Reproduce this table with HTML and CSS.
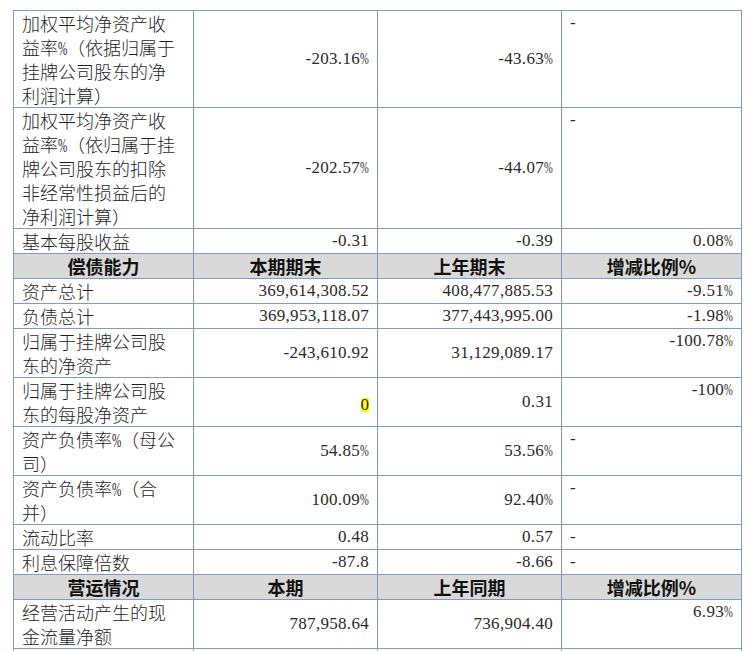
FILE: index.html
```html
<!DOCTYPE html>
<html lang="zh-CN">
<head>
<meta charset="utf-8">
<link rel="stylesheet" href="styles.css">
</head>
<body>
<table class="fin">
  <colgroup>
    <col class="c1"><col class="c2"><col class="c3"><col class="c4">
  </colgroup>
  <tbody>
    <tr>
      <td class="lbl">加权平均净资产收<br>益率<span class="pc">%</span>（依据归属于<br>挂牌公司股东的净<br>利润计算）</td>
      <td class="num">-203.16<span class="pc">%</span></td>
      <td class="num">-43.63<span class="pc">%</span></td>
      <td class="chg dash">-</td>
    </tr>
    <tr>
      <td class="lbl">加权平均净资产收<br>益率<span class="pc">%</span>（依归属于挂<br>牌公司股东的扣除<br>非经常性损益后的<br>净利润计算）</td>
      <td class="num">-202.57<span class="pc">%</span></td>
      <td class="num">-44.07<span class="pc">%</span></td>
      <td class="chg dash">-</td>
    </tr>
    <tr>
      <td class="lbl">基本每股收益</td>
      <td class="num">-0.31</td>
      <td class="num">-0.39</td>
      <td class="chg">0.08<span class="pc">%</span></td>
    </tr>
    <tr class="head">
      <th>偿债能力</th>
      <th>本期期末</th>
      <th>上年期末</th>
      <th>增减比例%</th>
    </tr>
    <tr>
      <td class="lbl">资产总计</td>
      <td class="num">369,614,308.52</td>
      <td class="num">408,477,885.53</td>
      <td class="chg">-9.51<span class="pc">%</span></td>
    </tr>
    <tr>
      <td class="lbl">负债总计</td>
      <td class="num">369,953,118.07</td>
      <td class="num">377,443,995.00</td>
      <td class="chg">-1.98<span class="pc">%</span></td>
    </tr>
    <tr>
      <td class="lbl">归属于挂牌公司股<br>东的净资产</td>
      <td class="num">-243,610.92</td>
      <td class="num">31,129,089.17</td>
      <td class="chg">-100.78<span class="pc">%</span></td>
    </tr>
    <tr>
      <td class="lbl">归属于挂牌公司股<br>东的每股净资产</td>
      <td class="num"><span class="hl">0</span></td>
      <td class="num">0.31</td>
      <td class="chg">-100<span class="pc">%</span></td>
    </tr>
    <tr>
      <td class="lbl">资产负债率<span class="pc">%</span>（母公<br>司）</td>
      <td class="num">54.85<span class="pc">%</span></td>
      <td class="num">53.56<span class="pc">%</span></td>
      <td class="chg dash">-</td>
    </tr>
    <tr>
      <td class="lbl">资产负债率<span class="pc">%</span>（合<br>并）</td>
      <td class="num">100.09<span class="pc">%</span></td>
      <td class="num">92.40<span class="pc">%</span></td>
      <td class="chg dash">-</td>
    </tr>
    <tr>
      <td class="lbl">流动比率</td>
      <td class="num">0.48</td>
      <td class="num">0.57</td>
      <td class="chg dash">-</td>
    </tr>
    <tr>
      <td class="lbl">利息保障倍数</td>
      <td class="num">-87.8</td>
      <td class="num">-8.66</td>
      <td class="chg dash">-</td>
    </tr>
    <tr class="head">
      <th>营运情况</th>
      <th>本期</th>
      <th>上年同期</th>
      <th>增减比例%</th>
    </tr>
    <tr>
      <td class="lbl">经营活动产生的现<br>金流量净额</td>
      <td class="num">787,958.64</td>
      <td class="num">736,904.40</td>
      <td class="chg">6.93<span class="pc">%</span></td>
    </tr>
    <tr class="spare">
      <td class="lbl"></td>
      <td class="num"></td>
      <td class="num"></td>
      <td class="chg"></td>
    </tr>
  </tbody>
</table>
</body>
</html>
```

FILE: styles.css
```css
html, body {
  margin: 0;
  padding: 0;
  background: #ffffff;
}

body {
  padding: 10px 0 0 13px;
  font-family: "Liberation Serif", "Noto Sans CJK SC", serif;
  color: #222222;
  overflow: hidden;
}

.fin {
  border-collapse: collapse;
  table-layout: fixed;
  width: 729px;
}

.c1 { width: 180px; }
.c2 { width: 184px; }
.c3 { width: 184px; }
.c4 { width: 180px; }

.fin td,
.fin th {
  border: 1px solid #7b9cc8;
  padding: 0 8px;
  line-height: 24px;
  white-space: nowrap;
  overflow: hidden;
}

.lbl {
  font-family: "Noto Sans CJK SC", sans-serif;
  font-size: 18px;
  font-weight: 300;
  vertical-align: top;
  text-align: left;
  color: #1e1e1e;
}

.lbl .pc {
  font-family: "Liberation Serif", serif;
  font-weight: 400;
}

.num {
  font-size: 17px;
  letter-spacing: 0.3px;
  text-align: right;
  vertical-align: middle;
  padding-right: 9px;
  color: #2a2a2a;
}

.chg {
  font-size: 17px;
  letter-spacing: 0.3px;
  text-align: right;
  vertical-align: top;
  color: #2a2a2a;
}

.chg.dash {
  text-align: left;
}

.pc {
  display: inline-block;
  width: 9px;
  line-height: 1;
  transform: scaleX(0.62);
  transform-origin: left center;
  letter-spacing: 0;
}

.hl {
  display: inline-block;
  line-height: 14px;
  vertical-align: -3px;
  letter-spacing: 0;
  background: #ffff00;
}

.head th {
  background: #d9d9d9;
  font-family: "Noto Sans CJK SC", sans-serif;
  font-size: 18px;
  font-weight: 700;
  text-align: center;
  color: #111111;
}

.spare td {
  height: 24px;
}
```
